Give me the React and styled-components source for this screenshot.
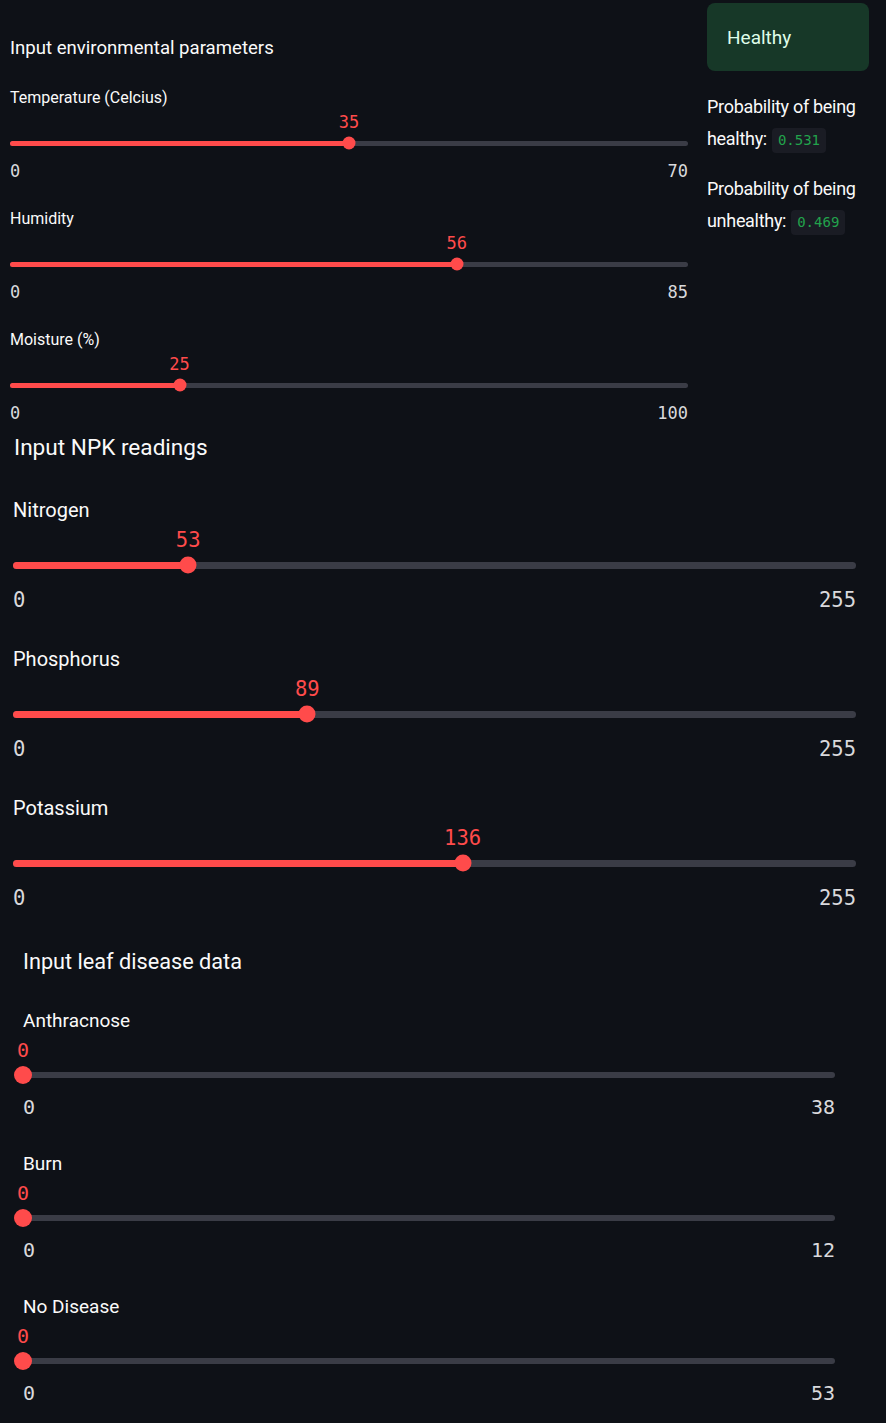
import React from "react";
import styled, { createGlobalStyle } from "styled-components";

const GlobalStyle = createGlobalStyle`
  body {
    margin: 0;
    background: #0e1117;
  }
`;

const SANS = `Roboto, "Noto Sans", sans-serif`;
const MONO = `"DejaVu Sans Mono", "Liberation Mono", monospace`;

// per section sizing (the three blocks are captured at different zoom levels)
const env = {
    label: 16, labelRow: 24, valueFont: 17, valueRow: 24, trackRow: 18,
    trackH: 5, thumb: 13, tickFont: 17, tickGap: 7, tickRow: 24, gap: 24
};
const npk = {
    label: 20, labelRow: 32, valueFont: 20.5, valueRow: 28, trackRow: 22,
    trackH: 7, thumb: 17, tickFont: 20.5, tickGap: 10, tickRow: 28, gap: 29
};
const leaf = {
    label: 19, labelRow: 30, valueFont: 20, valueRow: 28, trackRow: 22,
    trackH: 6, thumb: 18, tickFont: 20, tickGap: 7, tickRow: 28, gap: 28
};

const Slider = ({ label, value, min = 0, max, sz }) => {
    const pct = ((value - min) / (max - min)) * 100;
    return (
        <SliderBlock>
            <Label $sz={sz}>{label}</Label>
            <ValueRow $sz={sz}>
                <Value $sz={sz} style={{ left: pct + "%" }}>{value}</Value>
            </ValueRow>
            <TrackRow $sz={sz}>
                <Track $sz={sz}>
                    <Fill style={{ width: pct + "%" }} />
                    <Thumb $sz={sz} style={{ left: pct + "%" }} />
                </Track>
            </TrackRow>
            <Ticks $sz={sz}>
                <span>{min}</span>
                <span>{max}</span>
            </Ticks>
        </SliderBlock>
    );
};

export default function App() {
    return (
        <Page>
            <GlobalStyle />
            <TopRow>
                <LeftCol>
                    <Heading $size={18.6} $line={30} $bottom={23}>Input environmental parameters</Heading>
                    <SliderList $gap={env.gap}>
                        <Slider sz={env} label="Temperature (Celcius)" value={35} max={70} />
                        <Slider sz={env} label="Humidity" value={56} max={85} />
                        <Slider sz={env} label="Moisture (%)" value={25} max={100} />
                    </SliderList>
                </LeftCol>
                <RightCol>
                    <StatusBox>Healthy</StatusBox>
                    <ProbText>
                        Probability of being healthy:<Code>0.531</Code>
                    </ProbText>
                    <ProbText>
                        Probability of being unhealthy:<Code>0.469</Code>
                    </ProbText>
                </RightCol>
            </TopRow>

            <Section $left={13} $width={843} $top={6}>
                <Heading $size={22.6} $line={34} $bottom={29} $indent={1}>Input NPK readings</Heading>
                <SliderList $gap={npk.gap}>
                    <Slider sz={npk} label="Nitrogen" value={53} max={255} />
                    <Slider sz={npk} label="Phosphorus" value={89} max={255} />
                    <Slider sz={npk} label="Potassium" value={136} max={255} />
                </SliderList>
            </Section>

            <Section $left={23} $width={812} $top={34}>
                <Heading $size={21.7} $line={32} $bottom={28}>Input leaf disease data</Heading>
                <SliderList $gap={leaf.gap}>
                    <Slider sz={leaf} label="Anthracnose" value={0} max={38} />
                    <Slider sz={leaf} label="Burn" value={0} max={12} />
                    <Slider sz={leaf} label="No Disease" value={0} max={53} />
                </SliderList>
            </Section>
        </Page>
    );
}

const Page = styled.div`
    width: 886px;
    min-height: 1423px;
    background: #0e1117;
    color: #fafafa;
    font-family: ${SANS};
    overflow: hidden;
`;

const TopRow = styled.div`
    display: flex;
    gap: 19px;
    padding-left: 10px;
`;

const LeftCol = styled.div`
    width: 678px;
    padding-top: 33px;
`;

const RightCol = styled.div`
    width: 164px;
    padding-top: 3px;
`;

const Section = styled.div`
    width: ${p => p.$width}px;
    margin-left: ${p => p.$left}px;
    margin-top: ${p => p.$top}px;
`;

const Heading = styled.div`
    font-size: ${p => p.$size}px;
    line-height: ${p => p.$line}px;
    height: ${p => p.$line}px;
    margin-bottom: ${p => p.$bottom}px;
    padding-left: ${p => p.$indent || 0}px;
    white-space: nowrap;
`;

const SliderList = styled.div`
    display: flex;
    flex-direction: column;
    gap: ${p => p.$gap}px;
`;

const SliderBlock = styled.div`
    display: flex;
    flex-direction: column;
`;

const Label = styled.div`
    font-size: ${p => p.$sz.label}px;
    line-height: ${p => p.$sz.labelRow}px;
    height: ${p => p.$sz.labelRow}px;
    white-space: nowrap;
`;

const ValueRow = styled.div`
    position: relative;
    height: ${p => p.$sz.valueRow}px;
`;

const Value = styled.span`
    position: absolute;
    top: 0;
    transform: translateX(-50%);
    font-family: ${MONO};
    font-size: ${p => p.$sz.valueFont}px;
    line-height: ${p => p.$sz.valueRow}px;
    color: #ff4b4b;
    white-space: nowrap;
`;

const TrackRow = styled.div`
    height: ${p => p.$sz.trackRow}px;
    display: flex;
    align-items: center;
`;

const Track = styled.div`
    position: relative;
    width: 100%;
    height: ${p => p.$sz.trackH}px;
    border-radius: 4px;
    background: #3a3c46;
`;

const Fill = styled.div`
    height: 100%;
    border-radius: 4px;
    background: #ff4b4b;
`;

const Thumb = styled.div`
    position: absolute;
    top: 50%;
    width: ${p => p.$sz.thumb}px;
    height: ${p => p.$sz.thumb}px;
    border-radius: 50%;
    background: #ff4b4b;
    transform: translate(-50%, -50%);
`;

const Ticks = styled.div`
    display: flex;
    justify-content: space-between;
    margin-top: ${p => p.$sz.tickGap}px;
    height: ${p => p.$sz.tickRow}px;
    line-height: ${p => p.$sz.tickRow}px;
    font-family: ${MONO};
    font-size: ${p => p.$sz.tickFont}px;
    color: #d9d9dc;
`;

const StatusBox = styled.div`
    width: 162px;
    box-sizing: border-box;
    height: 68px;
    display: flex;
    align-items: center;
    padding-left: 20px;
    border-radius: 8px;
    background: #173828;
    color: #dffde9;
    font-size: 19px;
`;

const ProbText = styled.p`
    margin: 20px 0 0;
    font-size: 18px;
    letter-spacing: -0.3px;
    line-height: 32px;
    & + & {
        margin-top: 18px;
    }
`;

const Code = styled.code`
    display: inline-block;
    vertical-align: middle;
    margin-left: 5px;
    font-family: ${MONO};
    font-size: 14px;
    letter-spacing: 0;
    line-height: 25px;
    padding: 0 6px;
    border-radius: 4px;
    background: #1a1c24;
    color: #22a34c;
`;
